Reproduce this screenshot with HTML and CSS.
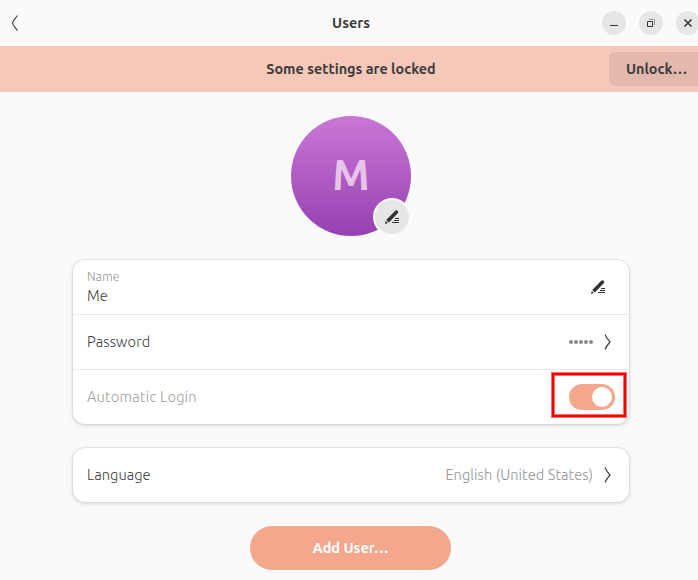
FILE: index.html
```html
<!DOCTYPE html>
<html lang="en">
<head>
<meta charset="utf-8">
<title>Users</title>
<link rel="stylesheet" href="styles.css">
</head>
<body>
<svg width="0" height="0" class="defs">
  <symbol id="pen" viewBox="0 0 16 16">
    <path d="M1 15 1.700 12 3.900 14Z M2.200 11.100 11.200 1.700Q12.600 .6 13.700 1.700T13.800 4.200L4.800 13.500Z"/>
    <path d="M11 9.500H15M10 11.500h5M8 13.500h7" fill="none" stroke="currentColor" stroke-width="1"/>
  </symbol>
  <symbol id="next" viewBox="0 0 8 16">
    <path d="M1 .5C2 3.200 4.200 6 6 8C4.200 10 2 12.800 1 15.500" fill="none" stroke="currentColor" stroke-width="1.15"/>
  </symbol>
</svg>
<div class="window">
  <header class="titlebar">
    <svg class="back" viewBox="0 0 8 16"><path d="M5.500 .5C3 4 .6 6 .6 8S3 12 5.500 15.500" fill="none" stroke="currentColor" stroke-width="1.15"/></svg>
    <h1 class="title">Users</h1>
    <div class="controls">
      <button class="control" aria-label="Minimize"><svg viewBox="0 0 24 24"><path d="M8 14.500h8"/></svg></button>
      <button class="control" aria-label="Restore"><svg viewBox="0 0 24 24"><path d="M8.500 10.500h5v5h-5z"/><path class="faint" d="M10 8.500h5.500V14"/></svg></button>
      <button class="control" aria-label="Close"><svg viewBox="0 0 24 24"><path class="cross" d="M8.500 8.500l7 7M15.500 8.500l-7 7"/></svg></button>
    </div>
  </header>
  <div class="banner">
    <span class="banner-text">Some settings are locked</span>
    <button class="unlock"><span>Unlock…</span></button>
  </div>
  <main class="content">
    <div class="avatar"><span class="initial">M</span>
      <button class="badge" aria-label="Edit picture"><svg class="pen"><use href="#pen"/></svg></button>
    </div>
    <section class="card">
      <div class="row">
        <div class="stack"><span class="caption">Name</span><span class="me">Me</span></div>
        <svg class="pen name-pen"><use href="#pen"/></svg>
      </div>
      <div class="row">
        <span class="password">Password</span>
        <span class="dots"><i></i><i></i><i></i><i></i><i></i></span>
        <svg class="next"><use href="#next"/></svg>
      </div>
      <div class="row">
        <span class="auto">Automatic Login</span>
        <span class="switch"><span class="knob"></span></span>
        <span class="highlight"></span>
      </div>
    </section>
    <section class="card">
      <div class="row">
        <span class="language">Language</span>
        <span class="value">English (United States)</span>
        <svg class="next"><use href="#next"/></svg>
      </div>
    </section>
    <button class="add"><span>Add User…</span></button>
  </main>
</div>
</body>
</html>
```
FILE: styles.css
```css
* { box-sizing: border-box; }
html { overflow: hidden; }
body {
  margin: 0;
  height: 580px;
  overflow: hidden;
  background: #fafafa;
  color: #3d3d3d;
  font: 350 14.667px/20px Ubuntu, "Noto Sans", sans-serif;
}
button { border: 0; padding: 0; font: inherit; color: inherit; }
.defs { position: absolute; }
.window { width: 702px; height: 580px; }
.titlebar {
  display: grid;
  grid-template-columns: 1fr auto 1fr;
  align-items: center;
  height: 46px;
  padding: 0 2px 0 12px;
}
.back { width: 8px; height: 16px; }
.title { margin: 0 0 0 -10px; font-size: 14.4px; font-weight: 600; }
.controls { display: flex; justify-content: flex-end; gap: 13px; }
.control { width: 24px; height: 24px; border-radius: 50%; background: #e6e6e6; }
.control svg { display: block; width: 24px; height: 24px; fill: none; stroke: #333; }
.control .faint { stroke: #999; }
.control .cross { stroke-width: 1.5; }
.banner {
  display: grid;
  grid-template-columns: 1fr auto 1fr;
  align-items: center;
  height: 46px;
  background: #f6c8b9;
  font-size: 14.4px;
  font-weight: 600;
}
.banner-text { grid-column: 2; }
.unlock {
  justify-self: end;
  width: 96px;
  height: 34px;
  margin-right: -3px;
  padding-left: 17px;
  border-radius: 6px;
  background: #e3b9ad;
  text-align: left;
}
.content { display: flex; flex-direction: column; align-items: center; gap: 24px; padding-top: 24px; }
.avatar {
  position: relative;
  display: grid;
  place-items: center;
  width: 120px;
  height: 120px;
  border-radius: 50%;
  background: linear-gradient(#c977d5, #9541b2);
}
.initial { margin-top: -2px; font-size: 42px; line-height: 48px; font-weight: 600; color: #e7c3e9; }
.badge {
  position: absolute;
  right: 0;
  bottom: 0;
  display: grid;
  place-items: center;
  width: 38px;
  height: 38px;
  border: 2px solid #fafafa;
  border-radius: 50%;
  background: #e6e6e6;
}
.pen { display: block; width: 16px; height: 16px; fill: currentColor; color: #333; }
.card {
  width: 556px;
  border-radius: 12px;
  background: #fff;
  box-shadow: 0 0 0 1px #0000000d, 0 1px 3px 1px #00000014, 0 2px 6px 2px #00000008;
}
.row { position: relative; display: flex; align-items: center; height: 54px; padding: 0 14px; }
.row + .row { height: 55px; border-top: 1px solid #e9e9e9; }
.stack { display: flex; flex-direction: column; }
.caption { margin-top: -1px; font-size: 12.2px; line-height: 19px; letter-spacing: .15px; color: #949494; }
.name-pen { margin: 0 9px 0 auto; }
.password { letter-spacing: .15px; }
.dots { display: flex; gap: 1px; margin-left: auto; }
.dots i { width: 4px; height: 4px; border-radius: 50%; background: #888; }
.next { width: 8px; height: 16px; margin: 0 3px 0 11px; }
.auto { letter-spacing: .2px; color: #9e9e9e; }
.value { margin-left: auto; letter-spacing: .06px; color: #929292; }
.switch { width: 46px; height: 26px; margin-left: auto; padding: 3px; border-radius: 13px; background: #f4a78c; }
.knob { display: block; width: 20px; height: 20px; margin-left: auto; border-radius: 50%; background: #fff; }
.highlight {
  position: absolute;
  right: 3px;
  top: 3px;
  width: 74px;
  height: 44px;
  border: 2px solid #f50000;
  box-shadow: 0 0 0 1px #f5000090, inset 0 0 0 1px #f5000090;
}
.add {
  width: 201px;
  height: 44px;
  margin-right: 1px;
  border-radius: 22px;
  background: #f3a78d;
  color: #fff;
  font-size: 14.5px;
  font-weight: 600;
}
```
